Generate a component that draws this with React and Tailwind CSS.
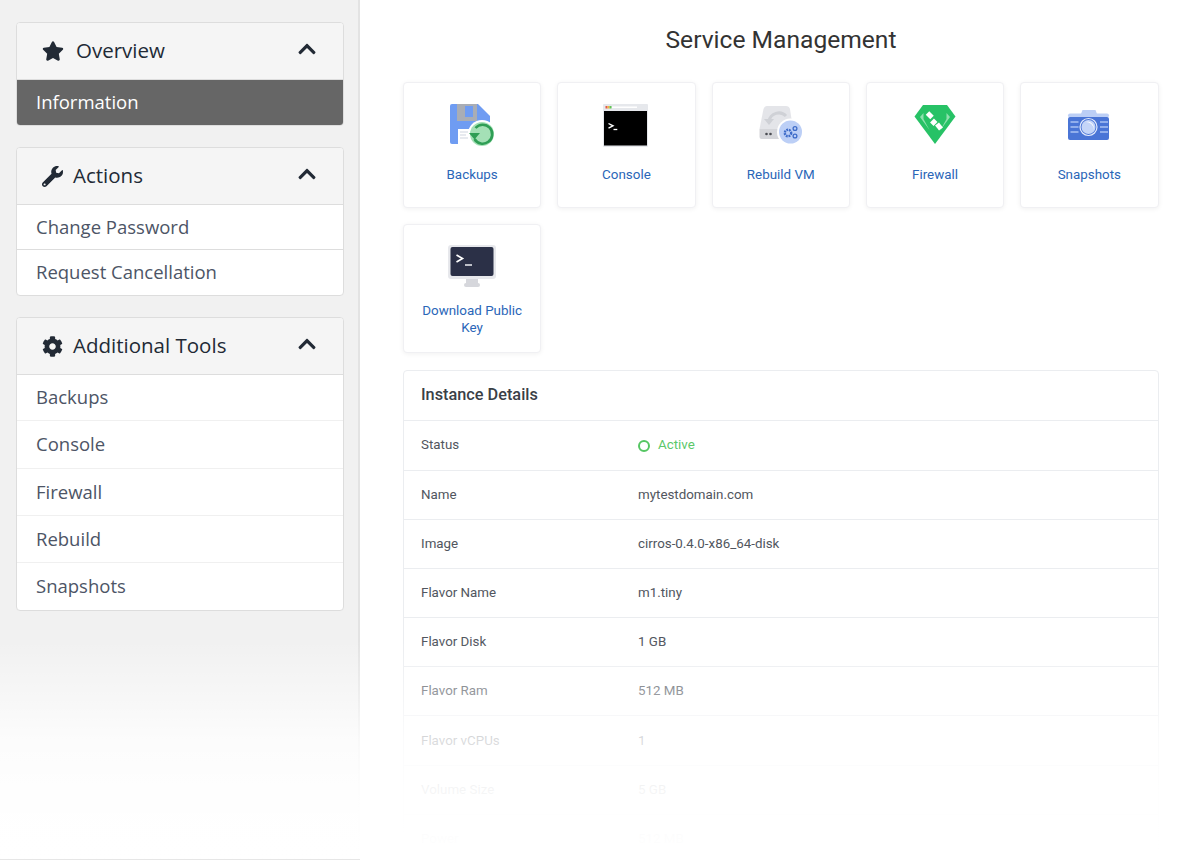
import { FaStar, FaWrench, FaCog, FaChevronUp } from "react-icons/fa";

function BackupsIcon() {
  return (
    <svg width="48" height="48" viewBox="0 0 48 48">
      <path d="M4 4h26l12 12v28H4a2 2 0 0 1-2-2V6a2 2 0 0 1 2-2z" fill="#6f9cf2" />
      <rect x="9" y="4" width="20" height="17" fill="#a9adb5" />
      <rect x="17" y="6" width="8" height="11" fill="#6f9cf2" />
      <rect x="10" y="29" width="22" height="15" fill="#ffffff" />
      <path d="M12 32h8M12 35h6M12 38h8" stroke="#dfe3ea" strokeWidth="1.400" />
      <circle cx="34" cy="34" r="14" fill="#ffffff" />
      <circle cx="34" cy="34" r="12" fill="#a4e0b6" />
      <path d="M27.500 28a9.500 9.500 0 1 1-1 11" fill="none" stroke="#2f9e55" strokeWidth="2.600" />
      <path d="M21 33h11l-5.500 6.500z" fill="#2f9e55" />
    </svg>
  );
}

function ConsoleIcon() {
  return (
    <svg width="48" height="48" viewBox="0 0 48 48">
      <rect x="1" y="4" width="45" height="43" rx="1" fill="#e6e8ec" />
      <rect x="3.500" y="6" width="2" height="2.500" fill="#e2574c" />
      <rect x="5.500" y="6" width="2" height="2.500" fill="#f3b33d" />
      <rect x="7.500" y="6" width="2" height="2.500" fill="#61c554" />
      <rect x="10" y="6.500" width="25" height="1.500" fill="#ffffff" />
      <rect x="2" y="11" width="43" height="34.500" fill="#000000" />
      <path d="M6.500 23.500l4.500 2.300-4.500 2.300" fill="none" stroke="#ffffff" strokeWidth="1.400" />
      <path d="M11.500 29.500h3.800" stroke="#ffffff" strokeWidth="1.300" />
    </svg>
  );
}

function RebuildIcon() {
  return (
    <svg width="48" height="48" viewBox="0 0 48 48">
      <path d="M10 6h19q3 0 4 3l3 20H2.500l4-20q1-3 3.500-3z" fill="#e4e5e9" />
      <path d="M12 21a10 10 0 0 1 17-5" fill="none" stroke="#cfd1d6" strokeWidth="3" />
      <path d="M7 19h10l-5 6z" fill="#cfd1d6" />
      <path d="M2.500 29h32v10H4.500a2 2 0 0 1-2-2z" fill="#d5d6da" />
      <circle cx="9.500" cy="34" r="1.300" fill="#4a4c52" />
      <circle cx="13.500" cy="34" r="1.300" fill="#4a4c52" />
      <circle cx="33.500" cy="32" r="13.500" fill="#ffffff" />
      <circle cx="33.500" cy="32" r="11.500" fill="#bccff6" />
      <circle cx="31" cy="33" r="3.200" fill="none" stroke="#3e6cc9" strokeWidth="2.400" strokeDasharray="1.800 0.800" />
      <circle cx="38" cy="28.500" r="1.900" fill="none" stroke="#3e6cc9" strokeWidth="1.300" />
      <circle cx="38" cy="36" r="1.900" fill="none" stroke="#3e6cc9" strokeWidth="1.300" />
    </svg>
  );
}

function FirewallIcon() {
  return (
    <svg width="48" height="48" viewBox="0 0 48 48">
      <path d="M12 5h24l8.500 11.500L24 44 3.500 16.500z" fill="#27c266" />
      <path d="M9 17l3.500-4 0 6 6 11zM39 17l-3.500-4 0 6-6 11z" fill="#8fe0ae" />
      <path d="M16.500 13l4.500 4.500" stroke="#ffffff" strokeWidth="5" />
      <path d="M21 20.500l3.500 3.500" stroke="#ffffff" strokeWidth="5.500" />
      <path d="M26 24l4 5" stroke="#ffffff" strokeWidth="5" />
    </svg>
  );
}

function SnapshotsIcon() {
  return (
    <svg width="48" height="48" viewBox="0 0 48 48">
      <path d="M16 14l1.500-4h13l1.500 4z" fill="#bccff6" />
      <rect x="3" y="13.500" width="41" height="4" rx="2" fill="#bccff6" />
      <rect x="3" y="17" width="41" height="23" rx="2" fill="#4a75d6" />
      <path d="M5.500 22h8M5.500 27h8M5.500 32h8M35 22h8M35 27h8M35 32h8" stroke="#a9c1f3" strokeWidth="1.400" />
      <circle cx="23.500" cy="27" r="8.500" fill="#4a75d6" stroke="#e4ebfb" strokeWidth="1.200" />
      <circle cx="23.500" cy="27" r="7" fill="#c4d5f8" />
      <path d="M20 22a7 7 0 0 1 9 8 8 8 0 0 0-9-8z" fill="#ffffff" />
    </svg>
  );
}

function KeyIcon() {
  return (
    <svg width="52" height="48" viewBox="0 0 52 48">
      <rect x="2" y="3" width="48" height="34" rx="3" fill="#e7e8ec" />
      <rect x="4.500" y="5" width="43" height="29" rx="2" fill="#2b3047" />
      <path d="M10.500 13l6 3.500-6 3.500" fill="none" stroke="#ffffff" strokeWidth="1.700" />
      <path d="M19 23h7" stroke="#d8dae0" strokeWidth="1.700" />
      <rect x="20" y="37" width="12" height="5" fill="#d6d7dc" />
      <rect x="18" y="41" width="16" height="4" rx="2" fill="#d6d7dc" />
    </svg>
  );
}

const actions = [
  { label: "Backups", Icon: BackupsIcon },
  { label: "Console", Icon: ConsoleIcon },
  { label: "Rebuild VM", Icon: RebuildIcon },
  { label: "Firewall", Icon: FirewallIcon },
  { label: "Snapshots", Icon: SnapshotsIcon },
];

const details = [
  ["Name", "mytestdomain.com"],
  ["Image", "cirros-0.4.0-x86_64-disk"],
  ["Flavor Name", "m1.tiny"],
  ["Flavor Disk", "1 GB"],
  ["Flavor Ram", "512 MB"],
  ["Flavor vCPUs", "1"],
  ["Volume Size", "5 GB"],
  ["Power", "512 MB"],
];

function Panel({ icon, title, gap, children }) {
  return (
    <div className="overflow-hidden rounded border border-[#dddddd] bg-white">
      <div className="flex h-[57px] items-center justify-between border-b border-[#dddddd] bg-[#f5f5f5] pl-[25px] pr-[26px] text-[#222a35]">
        <div className={`flex items-center ${gap}`}>
          {icon}
          <span className="relative -top-px text-[20.500px]">{title}</span>
        </div>
        <FaChevronUp className="relative -top-[2px] text-[20px]" />
      </div>
      {children}
    </div>
  );
}

function Item({ h, children, strong }) {
  return (
    <div className={`flex items-center border-b px-[19px] pb-px text-[18.500px] text-[#4d5566] last:border-b-0 ${h} ${strong}`}>
      {children}
    </div>
  );
}

function ActionCard({ label, children, h, mt }) {
  return (
    <div className={`flex flex-col items-center rounded border border-[#f0f0f3] bg-white px-3 pt-[17px] shadow-[0_1px_5px_rgba(0,0,0,0.06)] ${h}`}>
      <div className="flex h-[48px] items-center justify-center">{children}</div>
      <div className={`flex h-[34px] items-center text-center text-[13.400px] leading-[17px] text-[#2a66b8] ${mt}`}>{label}</div>
    </div>
  );
}

function Row({ label, h = "h-[49.100px]", children }) {
  return (
    <div className={`flex shrink-0 items-center border-b border-[#ebedf0] px-[17px] text-[13.350px] text-[#51565e] ${h}`}>
      <div className="w-[217px]">{label}</div>
      {children}
    </div>
  );
}

export default function App() {
  return (
    <div className="relative flex h-[860px] w-[1200px] overflow-hidden bg-white font-['Roboto',sans-serif]">
      <aside className="flex w-[360px] shrink-0 flex-col gap-[21px] border-r-2 border-[#e3e3e3] bg-[#f1f1f1] pl-4 pr-[14px] pt-[22px] font-['Open_Sans',sans-serif]">
        <Panel icon={<FaStar className="text-[22px]" />} title="Overview" gap="gap-[12px]">
          <Item h="h-[45px] border-[#777777] bg-[#666666]" strong="font-medium text-white">Information</Item>
        </Panel>
        <Panel icon={<FaWrench className="text-[21px]" />} title="Actions" gap="gap-[10px]">
          <Item h="h-[45px] border-[#dddddd]">Change Password</Item>
          <Item h="h-[45px] border-[#dddddd]">Request Cancellation</Item>
        </Panel>
        <Panel icon={<FaCog className="text-[21px]" />} title="Additional Tools" gap="gap-[10px]">
          <Item h="h-[46px] border-[#f0f0f0]">Backups</Item>
          <Item h="h-[48px] border-[#f0f0f0]">Console</Item>
          <Item h="h-[47px] border-[#f0f0f0]">Firewall</Item>
          <Item h="h-[47px] border-[#f0f0f0]">Rebuild</Item>
          <Item h="h-[47px] border-[#f0f0f0]">Snapshots</Item>
        </Panel>
      </aside>

      <main className="flex w-[840px] flex-col pl-[43px] pr-[41px] pt-[26px]">
        <h1 className="mb-[28px] text-center text-[24.600px] leading-[28px] text-[#333333]">Service Management</h1>
        <div className="mr-[0.500px] grid grid-cols-5 gap-x-[16px] gap-y-[16px]">
          {actions.map(({ label, Icon }) => (
            <ActionCard key={label} label={label} h="h-[126px]" mt="mt-[9px]">
              <Icon />
            </ActionCard>
          ))}
          <ActionCard label="Download Public Key" h="h-[129px]" mt="mt-[12px]">
            <KeyIcon />
          </ActionCard>
        </div>
        <section className="mt-[17px] flex flex-col rounded border border-[#ebedf0] bg-white">
          <div className="flex h-[50px] shrink-0 items-center border-b border-[#ebedf0] px-[17px] pb-px text-[16.300px] font-medium text-[#3a3f47]">
            Instance Details
          </div>
          <Row label="Status" h="h-[50px]">
            <span className="mr-[8px] h-[12px] w-[12px] rounded-full border-2 border-[#55c663]" />
            <span className="text-[#5cc86a]">Active</span>
          </Row>
          {details.map(([label, value]) => (
            <Row key={label} label={label}>
              <span>{value}</span>
            </Row>
          ))}
        </section>
      </main>

      {/* fade over the bottom of the page */}
      <div className="pointer-events-none absolute bottom-0 left-0 h-[220px] w-full bg-[linear-gradient(to_bottom,rgba(255,255,255,0)_0%,rgba(255,255,255,0.38)_23%,rgba(255,255,255,0.78)_45%,rgba(255,255,255,0.94)_68%,rgba(255,255,255,0.99)_90%,#ffffff_100%)]">
        <div className="absolute bottom-0 left-0 h-px w-[360px] bg-[#e6e6e6]" />
      </div>
    </div>
  );
}
